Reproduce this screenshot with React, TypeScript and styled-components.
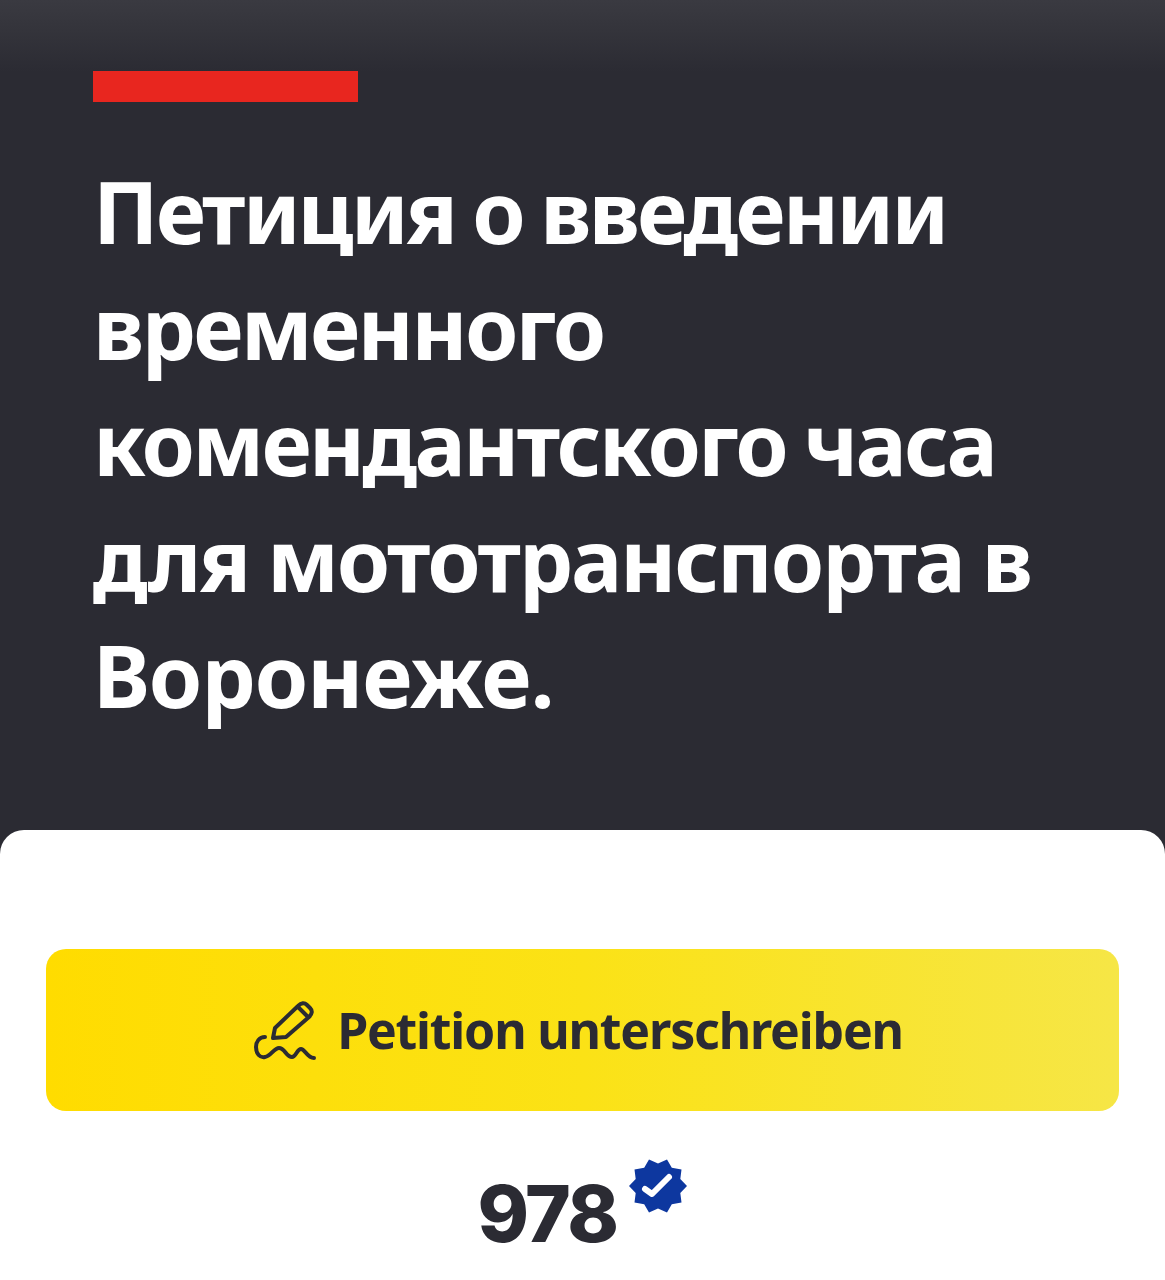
import React from 'react';
import styled, { createGlobalStyle } from 'styled-components';

const GlobalStyle = createGlobalStyle`
  html, body {
    margin: 0;
    padding: 0;
    background: #2b2b33;
  }
  body {
    font-family: "Noto Sans", "Open Sans", sans-serif;
  }
`;

const Page = styled.div`
  width: 1165px;
  height: 1280px;
  overflow: hidden;
  display: flex;
  flex-direction: column;
  background: #2b2b33;
`;

const Hero = styled.header`
  height: 830px;
  box-sizing: border-box;
  padding: 71px 93px 0;
  background: linear-gradient(180deg, #3a3a41 0%, #34343b 30px, #2b2b33 72px);
`;

const Accent = styled.div`
  width: 265px;
  height: 31px;
  background: #e8261f;
`;

const Title = styled.h1`
  margin: 51px 0 0;
  font-size: 86px;
  line-height: 116px;
  font-weight: 700;
  word-spacing: -2px;
  color: #ffffff;
`;

const TitleLine = styled.span<{ $tracking: number }>`
  display: block;
  white-space: nowrap;
  letter-spacing: ${(p) => p.$tracking}px;
`;

const Sheet = styled.section`
  flex: 1;
  box-sizing: border-box;
  padding: 119px 46px 0;
  background: #ffffff;
  border-radius: 24px 24px 0 0;
  display: flex;
  flex-direction: column;
  align-items: center;
`;

const SignButton = styled.button`
  width: 100%;
  height: 162px;
  flex-shrink: 0;
  border: 0;
  border-radius: 20px;
  padding: 0 8px 0 0;
  background: linear-gradient(90deg, #ffdc00 0%, #fbe216 50%, #f6e646 100%);
  display: flex;
  align-items: center;
  justify-content: center;
  gap: 21px;
  font-family: inherit;
  font-size: 50px;
  font-weight: 700;
  letter-spacing: -1.2px;
  color: #2b2b33;
`;

const Count = styled.div`
  margin-top: 47px;
  display: flex;
  align-items: flex-start;
  gap: 13px;
`;

const Number = styled.span`
  font-family: "Inter", sans-serif;
  font-size: 78px;
  line-height: 112px;
  font-weight: 800;
  letter-spacing: -2.6px;
  color: #2b2b33;
`;

const PenIcon = () => (
  <svg width="62" height="60" viewBox="0 0 62 60" fill="none" stroke="#2b2b33" strokeWidth="4" strokeLinecap="round" strokeLinejoin="round">
    <path d="M19 38 L21 28 L44 6 Q49 1 53 5 L56 8 Q60 12 55 17 L32 37 Z" />
    <path d="M44 7 L54 17" />
    <path d="M11 37 C5 37 2 42 2 47 C2 54 6 58 11 57 C17 56 20 48 25 48 C31 48 32 57 38 57 C42 57 43 49 47 49 C51 49 53 58 60 58" />
  </svg>
);

// ten-pointed seal, alternating outer and inner radius every 18 degrees
const sealPoints = Array.from({ length: 20 }, (_, i) => {
  const radius = i % 2 === 0 ? 29 : 23.5;
  const angle = (i * 18 * Math.PI) / 180;
  return `${(29 + radius * Math.cos(angle)).toFixed(1)},${(28 + radius * 0.96 * Math.sin(angle)).toFixed(1)}`;
}).join(' ');

const VerifiedBadge = () => (
  <svg width="58" height="56" viewBox="0 0 58 56">
    <polygon fill="#0d379f" points={sealPoints} />
    <path d="M16 31 L23 36 L40 19" fill="none" stroke="#ffffff" strokeWidth="6" strokeLinecap="round" strokeLinejoin="round" />
  </svg>
);

const App: React.FC = () => (
  <Page>
    <GlobalStyle />
    <Hero>
      <Accent />
      <Title>
        <TitleLine $tracking={-2.9}>Петиция о введении</TitleLine>
        <TitleLine $tracking={-2.75}>временного</TitleLine>
        <TitleLine $tracking={-2.75}>комендантского часа</TitleLine>
        <TitleLine $tracking={-2.25}>для мототранспорта в</TitleLine>
        <TitleLine $tracking={-1.1}>Воронеже.</TitleLine>
      </Title>
    </Hero>
    <Sheet>
      <SignButton>
        <PenIcon />
        Petition unterschreiben
      </SignButton>
      <Count>
        <Number>978</Number>
        <VerifiedBadge />
      </Count>
    </Sheet>
  </Page>
);

export default App;
